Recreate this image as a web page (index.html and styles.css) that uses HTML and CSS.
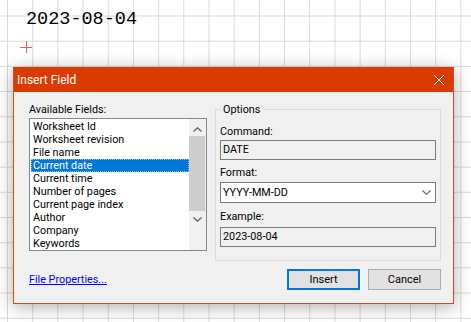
FILE: index.html
```html
<!DOCTYPE html>
<html lang="en">
<head>
    <meta charset="UTF-8">
    <title>Insert Field</title>
    <link rel="stylesheet" href="styles.css">
</head>
<body>
    <div class="stamp">2023-08-04</div>
    <svg class="cursor" width="12" height="12" viewBox="0 0 12 12">
        <path d="M0 6.5H12M6.5 0V12" stroke="#f55" stroke-width="1" fill="none"/>
    </svg>

    <div class="dialog">
        <div class="titlebar">
            <span>Insert Field</span>
            <svg width="10" height="10" viewBox="0 0 10 10">
                <path d="M0 0L10 10M10 0L0 10" stroke="#fff" stroke-width="1" fill="none"/>
            </svg>
        </div>

        <div class="dialog-body">
            <div class="columns">
                <!-- Left: field list -->
                <div class="fields">
                    <div class="label">Available Fields:</div>
                    <div class="listbox">
                        <ul class="items">
                            <li>Worksheet Id</li>
                            <li>Worksheet revision</li>
                            <li>File name</li>
                            <li class="selected">Current date</li>
                            <li>Current time</li>
                            <li>Number of pages</li>
                            <li>Current page index</li>
                            <li>Author</li>
                            <li>Company</li>
                            <li>Keywords</li>
                        </ul>
                        <div class="scrollbar">
                            <div class="scroll-btn up">
                                <svg width="9" height="5" viewBox="0 0 9 5"><path d="M0.5 4.5L4.5 0.8L8.5 4.5" stroke="#606060" stroke-width="1.3" fill="none"/></svg>
                            </div>
                            <div class="thumb"></div>
                            <div class="scroll-btn down">
                                <svg width="9" height="5" viewBox="0 0 9 5"><path d="M0.5 0.5L4.5 4.2L8.5 0.5" stroke="#606060" stroke-width="1.3" fill="none"/></svg>
                            </div>
                        </div>
                    </div>
                </div>

                <!-- Right: options -->
                <fieldset class="options">
                    <legend>Options</legend>
                    <div class="label">Command:</div>
                    <div class="textbox cmd">DATE</div>
                    <div class="label format-label">Format:</div>
                    <div class="combo">
                        <span>YYYY-MM-DD</span>
                        <svg width="9" height="5" viewBox="0 0 9 5"><path d="M0.5 0.5L4.5 4.3L8.5 0.5" stroke="#606060" stroke-width="1.1" fill="none"/></svg>
                    </div>
                    <div class="label example-label">Example:</div>
                    <div class="textbox example">2023-08-04</div>
                </fieldset>
            </div>

            <div class="footer">
                <a href="#" class="link">File Properties...</a>
                <div class="buttons">
                    <button class="btn default">Insert</button>
                    <button class="btn">Cancel</button>
                </div>
            </div>
        </div>
    </div>
</body>
</html>
```

FILE: styles.css
```css
/* Page / canvas */
body {
    margin: 0;
    height: 322px;
    overflow: hidden;
    background-color: #fff;
    background-image:
        linear-gradient(#d9d9d9 1px, transparent 1px),
        linear-gradient(90deg, #d9d9d9 1px, transparent 1px);
    background-size: 25.2px 25.2px;
    background-position: 7px 15.5px;
    font-family: Roboto, "Liberation Sans", sans-serif;
    font-size: 10.8px;
    color: #000;
}

.stamp {
    padding: 10px 0 0 26px;
    font-family: "Liberation Mono", monospace;
    font-size: 18.5px;
    line-height: 20px;
}

.cursor {
    display: block;
    margin: 11px 0 0 20px;
}

/* Dialog window */
.dialog {
    width: 439px;
    margin: 14px 0 0 13px;
    border: 1px solid #cf4d1e;
    border-top-color: #da3b01;
    background: #f0f0f0;
    box-shadow: 0 3px 16px rgba(0, 0, 0, 0.32);
}

.titlebar {
    display: flex;
    align-items: center;
    justify-content: space-between;
    height: 24px;
    padding: 0 9px 0 3px;
    background: #da3b01;
    color: #fff;
    font-size: 12px;
}

.titlebar svg {
    display: block;
}

.dialog-body {
    padding: 10px 12px 13px 15px;
}

.columns {
    display: flex;
    gap: 8px;
    align-items: flex-start;
}

.label {
    line-height: 15px;
    white-space: nowrap;
}

/* List box */
.fields {
    width: 178px;
}

.listbox {
    display: flex;
    height: 133px;
    margin-top: 1px;
    box-sizing: border-box;
    border: 1px solid #828790;
    background: #fff;
}

.items {
    flex: 1;
    list-style: none;
    margin: 0;
    padding: 1px 0 0 1px;
}

.items li {
    height: 13px;
    line-height: 13px;
    padding-left: 2px;
    white-space: nowrap;
}

.items li.selected {
    background: #0078d7;
    color: #fff;
    outline: 1px dotted #8fbbe6;
    outline-offset: -1px;
}

.scrollbar {
    width: 17px;
    display: flex;
    flex-direction: column;
    background: #f0f0f0;
}

.scroll-btn {
    height: 17px;
    display: flex;
    align-items: center;
    justify-content: center;
}

.scroll-btn svg {
    display: block;
}

.scroll-btn.up svg {
    margin-top: 4px;
}

.thumb {
    height: 75px;
    margin: 0 1px 0 0;
    background: #cdcdcd;
}

/* Options group */
.options {
    width: 226px;
    box-sizing: border-box;
    margin: 0;
    padding: 7px 4px 13px 4px;
    border: 1px solid #dcdcdc;
    min-width: 0;
}

.options legend {
    padding: 0 2px;
    margin-left: 1px;
    line-height: 15px;
}

.textbox {
    height: 20px;
    box-sizing: border-box;
    margin-top: 1px;
    padding-left: 2px;
    border: 1px solid #7a7a7a;
    line-height: 18px;
    background: #f0f0f0;
}

.format-label {
    margin-top: 5px;
}

.combo {
    display: flex;
    align-items: center;
    justify-content: space-between;
    height: 21px;
    box-sizing: border-box;
    margin-top: 2px;
    padding: 0 4px 0 2px;
    border: 1px solid #7a7a7a;
    background: #fff;
}

.combo svg {
    display: block;
}

.example-label {
    margin-top: 6px;
}

.textbox.example {
    margin-top: 3px;
}

/* Footer */
.footer {
    display: flex;
    align-items: center;
    justify-content: space-between;
    margin-top: 8px;
}

.link {
    color: #0000ff;
    text-decoration: underline;
}

.buttons {
    display: flex;
    gap: 8px;
}

.btn {
    width: 73px;
    height: 21px;
    box-sizing: border-box;
    padding: 0;
    border: 1px solid #adadad;
    background: #e1e1e1;
    font-family: inherit;
    font-size: 11px;
    color: #000;
}

.btn.default {
    border: 2px solid #0078d7;
}
```
